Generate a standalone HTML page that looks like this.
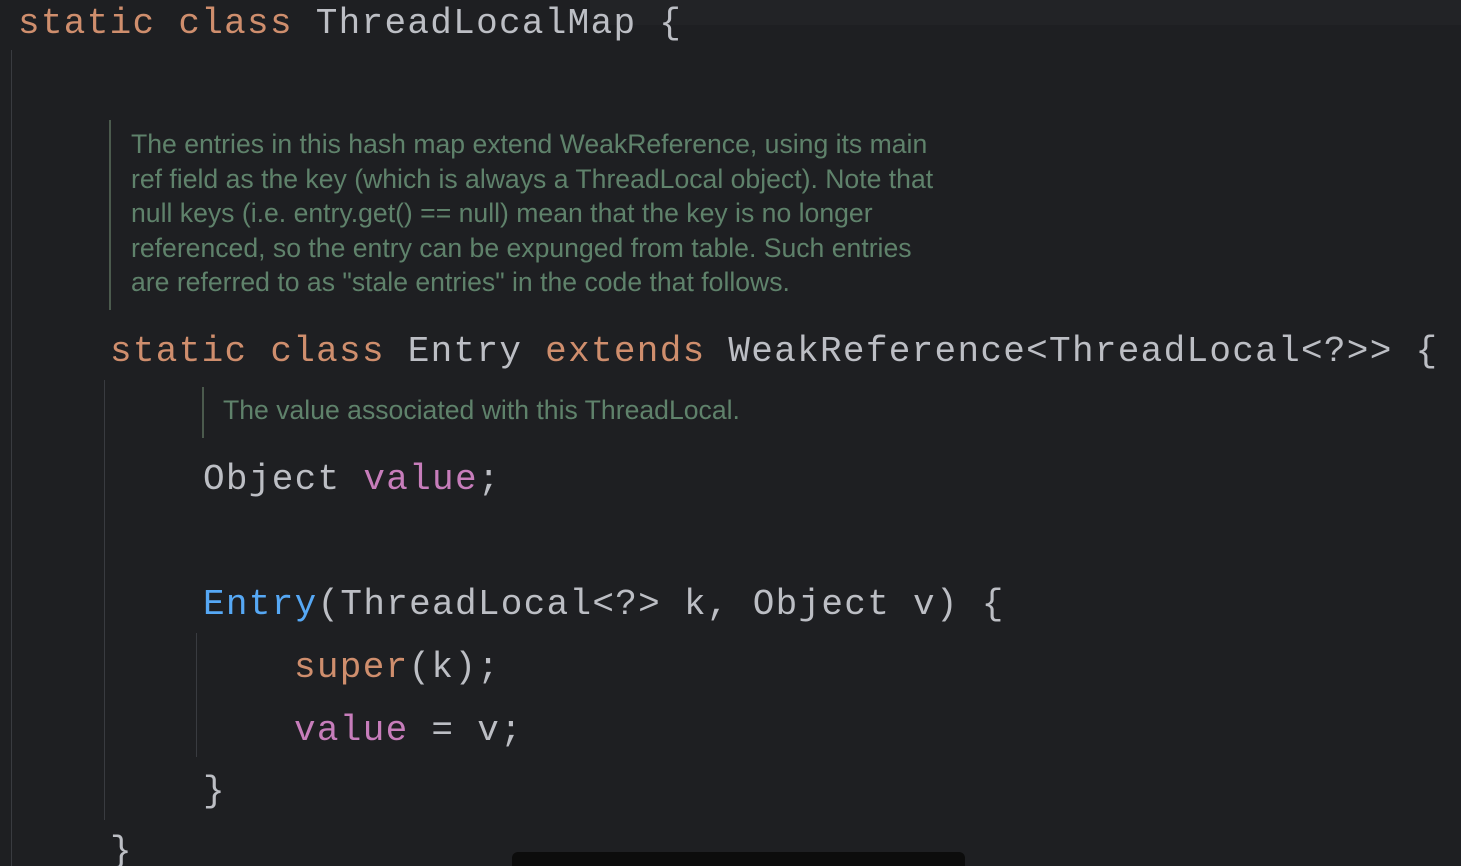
<!DOCTYPE html>
<html><head><style>
html,body{margin:0;padding:0;background:#1e1f22;width:1461px;height:866px;overflow:hidden;position:relative}
.c{position:absolute;font-family:"Liberation Mono",monospace;font-size:36px;letter-spacing:1.3px;color:#bcbec4;line-height:44px;white-space:pre}
.d{position:absolute;font-family:"Liberation Sans",sans-serif;font-size:26.6px;color:#5f826b;line-height:34.5px;white-space:pre}
.k{color:#cf8e6d}.p{color:#c77dbb}.b{color:#56a8f5}
.v{position:absolute;width:1px;background:#393b40}
.g{position:absolute;width:2px;background:#4b5a4d}
</style></head><body>
<div style="position:absolute;left:590px;top:0;width:871px;height:25px;background:#222326"></div>
<div class="v" style="left:11px;top:50px;height:816px"></div>
<div class="v" style="left:104px;top:380px;height:440px"></div>
<div class="v" style="left:196px;top:633px;height:124px"></div>
<div class="g" style="left:109px;top:120px;height:190px"></div>
<div class="g" style="left:202px;top:387px;height:51px"></div>
<div class="c" style="left:18px;top:2px"><span class="k">static class</span> ThreadLocalMap {</div>
<div class="d" style="left:131px;top:127px">The entries in this hash map extend WeakReference, using its main
ref field as the key (which is always a ThreadLocal object). Note that
null keys (i.e. entry.get() == null) mean that the key is no longer
referenced, so the entry can be expunged from table. Such entries
are referred to as "stale entries" in the code that follows.</div>
<div class="c" style="left:110px;top:330px"><span class="k">static class</span> Entry <span class="k">extends</span> WeakReference&lt;ThreadLocal&lt;?&gt;&gt; {</div>
<div class="d" style="left:223px;top:393px">The value associated with this ThreadLocal.</div>
<div class="c" style="left:203px;top:458px">Object <span class="p">value</span>;</div>
<div class="c" style="left:203px;top:583px"><span class="b">Entry</span>(ThreadLocal&lt;?&gt; k, Object v) {</div>
<div class="c" style="left:294px;top:646px"><span class="k">super</span>(k);</div>
<div class="c" style="left:294px;top:709px"><span class="p">value</span> = v;</div>
<div class="c" style="left:203px;top:770px">}</div>
<div class="c" style="left:110px;top:830px">}</div>
<div style="position:absolute;left:512px;top:852px;width:453px;height:20px;background:#0c0c0c;border-radius:6px"></div>
</body></html>
